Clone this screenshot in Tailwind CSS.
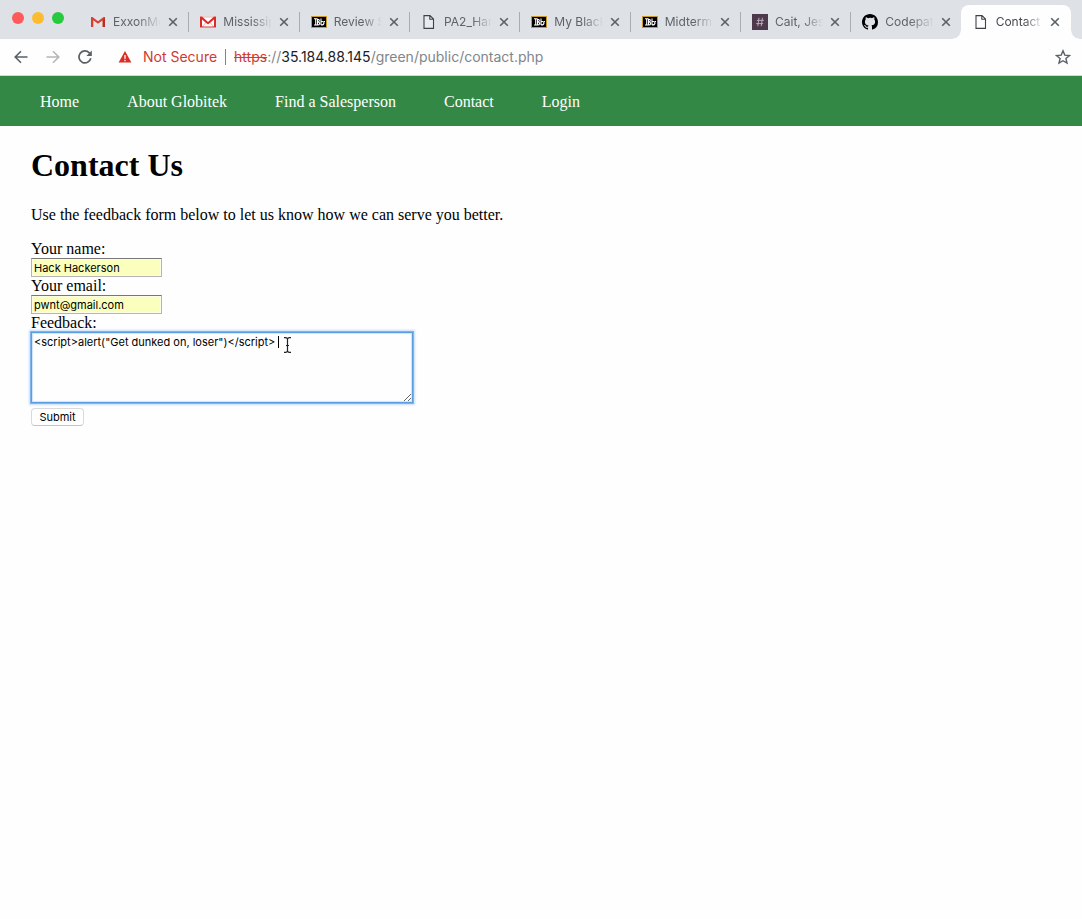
<!DOCTYPE html>
<html lang="en">
<head>
<meta charset="utf-8">
<title>Contact Us</title>
<script src="https://cdn.jsdelivr.net/npm/@tailwindcss/browser@4"></script>
</head>
<body class="min-h-screen bg-[#fefefe] text-black font-['Liberation_Serif',serif]">
<svg class="hidden">
  <symbol id="close" viewBox="0 0 10 10"><path d="M1.2 1.2 8.8 8.8M8.8 1.2 1.2 8.8" fill="none" stroke="#5a6268" stroke-width="1.6"/></symbol>
  <symbol id="bb" viewBox="0 0 16 16"><rect x=".5" y="2.500" width="15" height="11" fill="#000" stroke="#c79b27"/><path d="M3 4.800h3.500M4.700 4.500v7M6.500 5v6M3 11h4M6.500 5.200q2 .1 1.800 1.600-.2 1-1.800 1.100 2.200.1 2.100 1.700-.1 1.400-2.100 1.400M10 4.500v6.500M10 7.800q3-.9 3 1.200 0 2-3 2M13 7.500h1" fill="none" stroke="#fff" stroke-width="1.100"/></symbol>
  <symbol id="file" viewBox="0 0 16 16"><path d="M3 1.600h6L12.500 5.100v9.300H3zM8.800 1.800v3.500h3.500" fill="#fff" fill-opacity=".35" stroke="#3f4246" stroke-width="1.100"/></symbol>
</svg>
<header class="font-[Inter,sans-serif]">
  <div class="flex h-[39px] bg-[#dee1e6] pr-[11px]">
    <div class="flex w-[78px] shrink-0 gap-2 pl-3 pt-3">
      <button aria-label="Close window" class="size-3 rounded-full bg-[#fc5b57]"></button>
      <button aria-label="Minimize" class="size-3 rounded-full bg-[#fdbc30]"></button>
      <button aria-label="Zoom window" class="size-3 rounded-full bg-[#27c93f]"></button>
    </div>
    <nav aria-label="Tabs" class="grid min-w-0 flex-1 grid-cols-9 items-center pt-[5px] text-xs text-[#5f6368]">
      <div class="flex h-5 items-center pl-3 pr-[10px]">
        <svg class="size-4 shrink-0" viewBox="0 0 16 16"><path d="M3 5v8h10V5L8 9z" fill="#e3e3e3"/><path d="M1 3v10h2.300V6.200L8 9.800l4.700-3.600V13H15V3h-1.400L8 7.300 2.400 3z" fill="#d93f31"/><path d="M12.700 6.200V13H15V4z" fill="#b92e22"/></svg>
        <span class="ml-[7px] min-w-0 flex-1 overflow-hidden whitespace-nowrap [mask-image:linear-gradient(to_right,black_50%,transparent)]">ExxonMo</span>
        <button aria-label="Close tab" class="ml-[7px] shrink-0"><svg class="size-[10px]"><use href="#close"/></svg></button>
      </div>
      <div class="flex h-5 items-center border-l border-[#a9acb0] pl-[11px] pr-[10px]">
        <svg class="size-4 shrink-0" viewBox="0 0 16 16"><path d="M0 2.500h16v11H0z" fill="#fff"/><path d="M2 13l4.500-5M14 13 9.500 8M2 3h12" stroke="#e3a19c" stroke-width=".8"/><path d="M0 2.500h2L8 8l6-5.500h2v11h-2V5.400L8 10.600 2 5.400v8.100H0z" fill="#dd2c27"/><path d="M2 13h12" stroke="#dd2c27"/></svg>
        <span class="ml-[7px] min-w-0 flex-1 overflow-hidden whitespace-nowrap [mask-image:linear-gradient(to_right,black_60%,transparent)]">Mississip</span>
        <button aria-label="Close tab" class="ml-[7px] shrink-0"><svg class="size-[10px]"><use href="#close"/></svg></button>
      </div>
      <div class="flex h-5 items-center border-l border-[#a9acb0] pl-[11px] pr-[10px]">
        <svg class="size-4 shrink-0"><use href="#bb"/></svg>
        <span class="ml-[7px] min-w-0 flex-1 overflow-hidden whitespace-nowrap [mask-image:linear-gradient(to_right,black_60%,transparent)]">Review S</span>
        <button aria-label="Close tab" class="ml-[7px] shrink-0"><svg class="size-[10px]"><use href="#close"/></svg></button>
      </div>
      <div class="flex h-5 items-center border-l border-[#a9acb0] pl-[11px] pr-[10px]">
        <svg class="size-4 shrink-0"><use href="#file"/></svg>
        <span class="ml-[7px] min-w-0 flex-1 overflow-hidden whitespace-nowrap [mask-image:linear-gradient(to_right,black_60%,transparent)]">PA2_Har</span>
        <button aria-label="Close tab" class="ml-[7px] shrink-0"><svg class="size-[10px]"><use href="#close"/></svg></button>
      </div>
      <div class="flex h-5 items-center border-l border-[#a9acb0] pl-[11px] pr-[10px]">
        <svg class="size-4 shrink-0"><use href="#bb"/></svg>
        <span class="ml-[7px] min-w-0 flex-1 overflow-hidden whitespace-nowrap [mask-image:linear-gradient(to_right,black_60%,transparent)]">My Black</span>
        <button aria-label="Close tab" class="ml-[7px] shrink-0"><svg class="size-[10px]"><use href="#close"/></svg></button>
      </div>
      <div class="flex h-5 items-center border-l border-[#a9acb0] pl-[11px] pr-[10px]">
        <svg class="size-4 shrink-0"><use href="#bb"/></svg>
        <span class="ml-[7px] min-w-0 flex-1 overflow-hidden whitespace-nowrap [mask-image:linear-gradient(to_right,black_60%,transparent)]">Midterm</span>
        <button aria-label="Close tab" class="ml-[7px] shrink-0"><svg class="size-[10px]"><use href="#close"/></svg></button>
      </div>
      <div class="flex h-5 items-center border-l border-[#a9acb0] pl-[11px] pr-[10px]">
        <svg class="size-4 shrink-0" viewBox="0 0 16 16"><path d="M0 0h16v16H0z" fill="#4d394b"/><path d="M7 3.800 5.800 12.200M10.400 3.800 9.200 12.200M4.800 6.400h7M4.200 9.600h7" stroke="#b9a9b7" stroke-width="1"/></svg>
        <span class="ml-[7px] min-w-0 flex-1 overflow-hidden whitespace-nowrap [mask-image:linear-gradient(to_right,black_60%,transparent)]">Cait, Jes</span>
        <button aria-label="Close tab" class="ml-[7px] shrink-0"><svg class="size-[10px]"><use href="#close"/></svg></button>
      </div>
      <div class="flex h-5 items-center border-l border-[#a9acb0] pl-[11px] pr-[10px]">
        <svg class="size-4 shrink-0" viewBox="0 0 16 16"><path fill="#000" d="M8 0C3.580 0 0 3.580 0 8c0 3.540 2.290 6.530 5.470 7.590.4.070.55-.17.55-.38 0-.19-.01-.82-.01-1.490-2.010.37-2.530-.49-2.690-.94-.09-.23-.48-.94-.82-1.130-.28-.15-.68-.52-.01-.53.63-.01 1.080.58 1.230.82.72 1.210 1.870.87 2.330.66.07-.52.28-.87.51-1.070-1.780-.2-3.640-.89-3.640-3.950 0-.87.31-1.590.82-2.150-.08-.2-.36-1.020.08-2.120 0 0 .67-.21 2.200.82A7.600 7.600 0 0 1 8 3.860c.68 0 1.360.09 2 .27 1.530-1.040 2.200-.82 2.200-.82.44 1.100.16 1.920.08 2.120.51.56.82 1.270.82 2.150 0 3.070-1.870 3.750-3.650 3.950.29.25.54.73.54 1.480 0 1.070-.01 1.930-.01 2.200 0 .21.15.46.55.38A8 8 0 0 0 16 8c0-4.420-3.580-8-8-8z"/></svg>
        <span class="ml-[7px] min-w-0 flex-1 overflow-hidden whitespace-nowrap [mask-image:linear-gradient(to_right,black_50%,transparent)]">Codepat</span>
        <button aria-label="Close tab" class="ml-[7px] shrink-0"><svg class="size-[10px]"><use href="#close"/></svg></button>
      </div>
      <div class="relative flex items-center self-stretch rounded-t-lg bg-[#fefefe] pl-3 pr-[11px] text-[#45494d] before:absolute before:bottom-0 before:-left-2 before:size-2 before:bg-[radial-gradient(circle_at_0_0,transparent_7px,#fefefe_8px)] after:absolute after:bottom-0 after:-right-2 after:size-2 after:bg-[radial-gradient(circle_at_100%_0,transparent_7px,#fefefe_8px)]">
        <svg class="size-4 shrink-0"><use href="#file"/></svg>
        <span class="ml-[7px] min-w-0 flex-1 overflow-hidden whitespace-nowrap [mask-image:linear-gradient(to_right,black_60%,transparent)]">Contact</span>
        <button aria-label="Close tab" class="ml-[7px] shrink-0"><svg class="size-[10px]"><use href="#close"/></svg></button>
      </div>
    </nav>
  </div>
  <div class="flex h-[37px] items-center border-b border-[#d5d9d6] pl-[13px] pr-[11px] text-sm">
    <button aria-label="Back"><svg class="size-4" viewBox="0 0 16 16"><path d="M14.500 8H2.500M8 2.200 2.200 8 8 13.800" fill="none" stroke="#5a6066" stroke-width="1.600"/></svg></button>
    <button aria-label="Forward" class="ml-4"><svg class="size-4" viewBox="0 0 16 16"><path d="M1.500 8h12M8 2.200 13.800 8 8 13.800" fill="none" stroke="#b4b6b8" stroke-width="1.600"/></svg></button>
    <button aria-label="Reload" class="ml-4"><svg class="size-4" viewBox="0 0 16 16"><path d="M13.800 9.300A6 6 0 1 1 12.300 3.800L13.500 5" fill="none" stroke="#5a6066" stroke-width="1.700"/><path d="M14.800 1.600v5.400H9.400z" fill="#5a6066"/></svg></button>
    <svg class="ml-[25px] h-3 w-[14px]" viewBox="0 0 14 12"><path d="M7 0 13.400 11.600H.6z" fill="#d93025"/><path d="M7 4v3.800M7 8.800v1.400" stroke="#fff" stroke-width="1.300"/></svg>
    <span class="ml-[11px] text-[#d03a30]">Not Secure</span>
    <span class="mx-2 h-4 w-px bg-[#808488]"></span>
    <span class="flex-1 whitespace-nowrap text-[#80868b]"><span class="text-[#d03a30] line-through">https</span>://<span class="text-[#202124]">35.184.88.145</span>/green/public/contact.php</span>
    <button aria-label="Bookmark this page"><svg class="size-4" viewBox="0 0 16 16"><path d="m8 1.800 1.800 4.300 4.700.4-3.600 3 1.100 4.600L8 11.700l-4 2.400 1.100-4.600-3.600-3 4.700-.4z" fill="none" stroke="#5a6066" stroke-width="1.400"/></svg></button>
  </div>
</header>
<nav aria-label="Main" class="flex h-[50px] items-center gap-12 bg-[#348845] px-10 pt-[2px] text-base text-white">
  <a href="#">Home</a><a href="#">About Globitek</a><a href="#">Find a Salesperson</a><a href="#">Contact</a><a href="#">Login</a>
</nav>
<main class="px-[31px] pt-[21px]">
  <h1 class="text-[32px] leading-[37px] font-bold">Contact Us</h1>
  <p class="mt-[22px] text-base leading-[18px]">Use the feedback form below to let us know how we can serve you better.</p>
  <form class="mt-4 flex flex-col items-start text-base leading-[18px]">
    <label for="name">Your name:</label>
    <input id="name" type="text" value="Hack Hackerson" class="h-[19px] w-[131px] border border-[#b5b5b5] border-t-[#777] bg-[#faffbd] px-[2px] font-[Inter,sans-serif] text-[11px] shadow-[inset_0_0_0_1px_#fdfde6]">
    <label for="email">Your email:</label>
    <input id="email" type="text" value="pwnt@gmail.com" class="h-[19px] w-[131px] border border-[#b5b5b5] border-t-[#777] bg-[#faffbd] px-[2px] font-[Inter,sans-serif] text-[11px] shadow-[inset_0_0_0_1px_#fdfde6]">
    <label for="feedback">Feedback:</label>
    <div class="relative flex">
      <textarea id="feedback" spellcheck="false" class="h-[71px] w-[382px] border border-[#5b9de2] bg-[#fefefe] px-[2px] py-[3px] font-[Inter,sans-serif] text-[11px] leading-[13px] shadow-[0_0_0_1px_#7fb3ec,0_0_2px_2px_#c5defa,inset_0_0_1px_1px_#cfe3fa] outline-none">&lt;script&gt;alert("Get dunked on, loser")&lt;/script&gt;</textarea>
      <span class="absolute left-[247px] top-1 h-3 w-px bg-black"></span>
      <svg class="absolute left-[252px] top-[5px] h-4 w-[9px]" viewBox="0 0 9 16"><path d="M1 .7h1.500Q4.500.7 4.500 2.500 4.500.7 6.500.7H8M4.500 2v12M1 15.300h1.500q2 0 2-1.800 0 1.800 2 1.800H8M3 8.500h3" fill="none" stroke="#222" stroke-width="1.200"/></svg>
    </div>
    <button type="button" class="mt-[5px] h-[18px] w-[53px] rounded-[4px] border border-[#dadada] border-b-[#c4c4c4] bg-white font-[Inter,sans-serif] text-[11px] leading-4">Submit</button>
  </form>
</main>
</body>
</html>
